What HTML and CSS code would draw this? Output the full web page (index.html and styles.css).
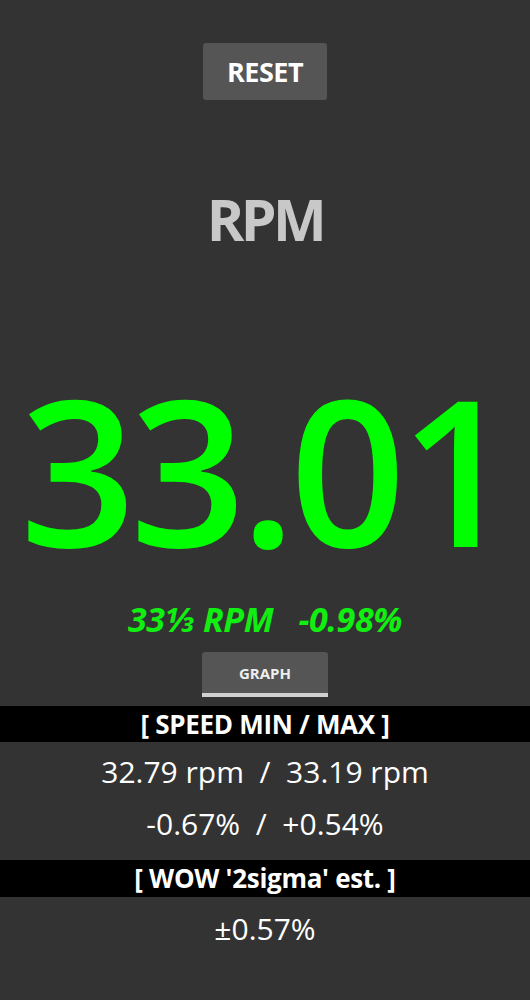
FILE: index.html
```html
<!DOCTYPE html>
<html>
<head>
<meta charset="utf-8">
<link rel="stylesheet" href="styles.css">
</head>
<body>
<main class="screen">
  <button class="btn-reset">RESET</button>
  <div class="title">RPM</div>
  <div class="big">33.01</div>
  <div class="sub">33⅓ RPM&nbsp;&nbsp;&nbsp;-0.98%</div>
  <button class="btn-graph">GRAPH</button>
  <div class="bar">[ SPEED MIN / MAX ]</div>
  <div class="values">
    <div class="line">32.79 rpm&nbsp;&nbsp;/&nbsp;&nbsp;33.19 rpm</div>
    <div class="line">-0.67%&nbsp;&nbsp;/&nbsp;&nbsp;+0.54%</div>
  </div>
  <div class="bar bar-wow">[ WOW '2sigma' est. ]</div>
  <div class="values values-wow">
    <div class="line">±0.57%</div>
  </div>
</main>
</body>
</html>
```

FILE: styles.css
```css
html, body {
  margin: 0;
  padding: 0;
  background: #333333;
}
.screen {
  width: 530px;
  min-height: 1000px;
  display: flex;
  flex-direction: column;
  align-items: center;
  font-family: "Open Sans", "Noto Sans", sans-serif;
  color: #ffffff;
}
.btn-reset {
  margin-top: 43px;
  width: 124px;
  height: 57px;
  border: none;
  border-radius: 3px;
  background: #555555;
  color: #ffffff;
  font-family: inherit;
  font-weight: 700;
  font-size: 27px;
  letter-spacing: -0.5px;
  padding: 0;
}
.title {
  margin-top: 90px;
  font-size: 57px;
  line-height: 58px;
  font-weight: 700;
  letter-spacing: -3.5px;
  color: #c8c8c8;
}
.big {
  margin-top: 119px;
  font-size: 203px;
  line-height: 203px;
  font-weight: 600;
  letter-spacing: -6px;
  color: #00ff00;
}
.sub {
  margin-top: 33px;
  font-size: 34px;
  line-height: 33px;
  font-weight: 700;
  font-style: italic;
  letter-spacing: -0.4px;
  color: #11ee11;
}
.btn-graph {
  margin-top: 16px;
  width: 126px;
  height: 45px;
  border: none;
  border-bottom: 4px solid #d0d0d0;
  border-radius: 3px 3px 0 0;
  background: #555555;
  color: #eeeeee;
  font-family: inherit;
  font-weight: 700;
  font-size: 15px;
  padding: 0;
}
.bar {
  margin-top: 9px;
  align-self: stretch;
  height: 36px;
  background: #000000;
  text-align: center;
  font-size: 26px;
  line-height: 36px;
  font-weight: 700;
  letter-spacing: -0.3px;
}
.bar-wow {
  margin-top: 0;
  height: 37px;
  line-height: 37px;
}
.values {
  padding: 4px 0 10px;
  display: flex;
  flex-direction: column;
  align-items: center;
}
.values-wow {
  padding-top: 6px;
}
.line {
  font-size: 30px;
  line-height: 52px;
}
```
